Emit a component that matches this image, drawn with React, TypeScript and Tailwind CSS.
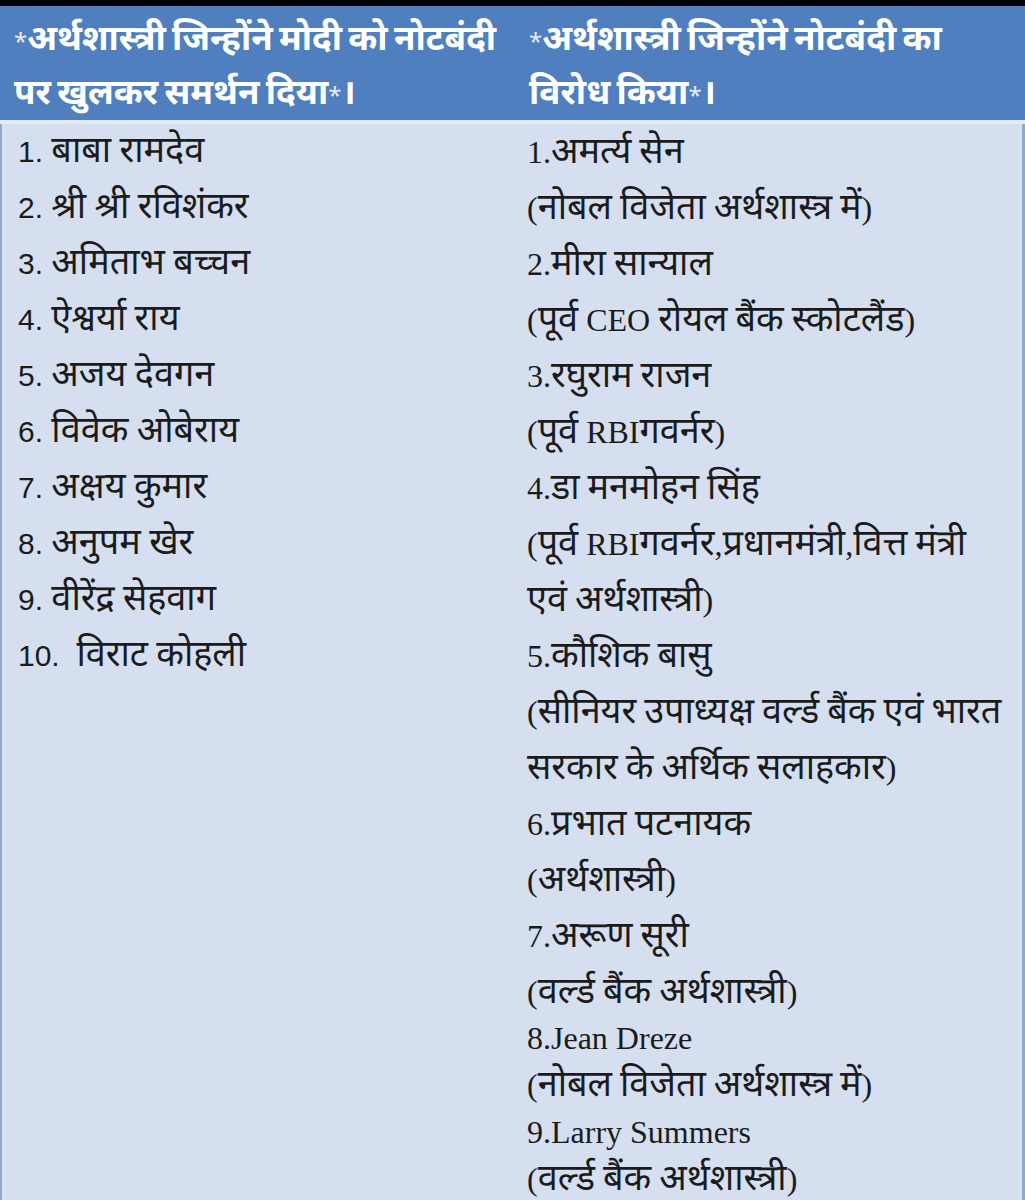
const devaFont = '"Noto Sans Devanagari", "Lohit Devanagari", "Noto Sans", sans-serif';

// split a line into Devanagari runs and everything else, so each gets its own face and size
function Mixed({ text, latin, deva = 'text-[36px]' }: { text: string; latin: string; deva?: string }) {
  const parts = text.split(/([\u0900-\u097F]+)/).filter((p) => p.length > 0);
  return (
    <>
      {parts.map((p, i) =>
        /[\u0900-\u097F]/.test(p) ? (
          <span key={i} className={deva} style={{ fontFamily: devaFont }}>
            {p}
          </span>
        ) : (
          <span key={i} className={latin}>
            {p}
          </span>
        )
      )}
    </>
  );
}

const supporters = [
  '1. बाबा रामदेव',
  '2. श्री श्री रविशंकर',
  '3. अमिताभ बच्चन',
  '4. ऐश्वर्या राय',
  '5. अजय देवगन',
  '6. विवेक ओबेराय',
  '7. अक्षय कुमार',
  '8. अनुपम खेर',
  '9. वीरेंद्र सेहवाग',
  '10.  विराट कोहली',
];

const opponents = [
  '1.अमर्त्य सेन',
  '(नोबल विजेता अर्थशास्त्र में)',
  '2.मीरा सान्याल',
  '(पूर्व CEO रोयल बैंक स्कोटलैंड)',
  '3.रघुराम राजन',
  '(पूर्व RBIगवर्नर)',
  '4.डा मनमोहन सिंह',
  '(पूर्व RBIगवर्नर,प्रधानमंत्री,वित्त मंत्री',
  'एवं अर्थशास्त्री)',
  '5.कौशिक बासु',
  '(सीनियर उपाध्यक्ष वर्ल्ड बैंक एवं भारत',
  'सरकार के अर्थिक सलाहकार)',
  '6.प्रभात पटनायक',
  '(अर्थशास्त्री)',
  '7.अरूण सूरी',
  '(वर्ल्ड बैंक अर्थशास्त्री)',
];

const opponentsTight = [
  '8.Jean Dreze',
  '(नोबल विजेता अर्थशास्त्र में)',
  '9.Larry Summers',
  '(वर्ल्ड बैंक अर्थशास्त्री)',
];

const sansLatin = 'text-[30px] font-["Liberation_Sans",sans-serif]';
const serifLatin = 'text-[32px] font-["Liberation_Serif",serif]';
const starLatin = 'text-[24px] font-normal text-[#e4ebf5]';

export default function App() {
  return (
    <div className="w-[1025px] h-[1200px] overflow-hidden bg-black">
      <div className="h-[6px] bg-black" />
      {/* header */}
      <div className="grid grid-cols-[505px_1fr] h-[114px] bg-[#4f7fbe] text-white font-bold pt-[8px]">
        <div className="pl-[14px]">
          <div className="h-[54px] leading-[54px] whitespace-nowrap">
            <Mixed text="*अर्थशास्त्री जिन्होंने मोदी को नोटबंदी" latin={starLatin} deva="text-[35px]" />
          </div>
          <div className="h-[54px] leading-[54px] whitespace-nowrap">
            <Mixed text="पर खुलकर समर्थन दिया*।" latin={starLatin} deva="text-[35px]" />
          </div>
        </div>
        <div className="pl-[24px]">
          <div className="h-[54px] leading-[54px] whitespace-nowrap">
            <Mixed text="*अर्थशास्त्री जिन्होंने नोटबंदी का" latin={starLatin} deva="text-[35px]" />
          </div>
          <div className="h-[54px] leading-[54px] whitespace-nowrap">
            <Mixed text="विरोध किया*।" latin={starLatin} deva="text-[35px]" />
          </div>
        </div>
      </div>
      <div className="h-[4px] bg-[#e3ebf7]" />
      {/* body */}
      <div className="grid grid-cols-[505px_1fr] h-[1076px] bg-[#d5dff0] text-[#1b1b1b] border-l-2 border-r-[3px] border-[#93a8c8]">
        <div className="pl-[16px]">
          {supporters.map((s) => (
            <div key={s} className="h-[56px] leading-[56px] whitespace-pre">
              <Mixed text={s} latin={sansLatin} />
            </div>
          ))}
        </div>
        <div className="pl-[20px]">
          {opponents.map((s, i) => (
            <div key={i} className="h-[56px] leading-[56px] whitespace-nowrap">
              <Mixed text={s} latin={serifLatin} />
            </div>
          ))}
          <div className="-mt-[5px]">
            {opponentsTight.map((s, i) => (
              <div key={i} className="h-[47px] leading-[47px] whitespace-nowrap">
                <Mixed text={s} latin={serifLatin} />
              </div>
            ))}
          </div>
        </div>
      </div>
    </div>
  );
}
